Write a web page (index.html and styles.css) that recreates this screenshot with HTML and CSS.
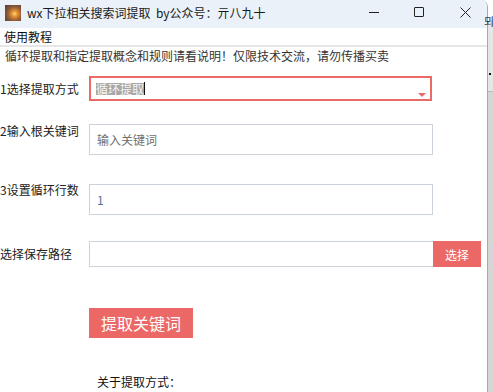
FILE: index.html
```html
<!DOCTYPE html>
<html lang="zh-CN">
<head>
    <meta charset="UTF-8">
    <title>wx下拉相关搜索词提取</title>
    <link rel="stylesheet" href="styles.css">
</head>
<body>
    <div class="screen">
        <div class="window">
            <div class="titlebar">
                <div class="app-icon"></div>
                <div class="title">wx下拉相关搜索词提取&nbsp;&nbsp;by公众号：亓八九十</div>
                <div class="controls">
                    <span class="ctl ctl-min"></span>
                    <span class="ctl ctl-max"></span>
                    <span class="ctl ctl-close">
                        <svg width="11" height="11" viewBox="0 0 11 11"><path d="M0.5 0.5L10.5 10.5M10.5 0.5L0.5 10.5" stroke="#222" stroke-width="1" fill="none"/></svg>
                    </span>
                </div>
            </div>
            <div class="menubar">使用教程</div>
            <div class="notice">循环提取和指定提取概念和规则请看说明！仅限技术交流，请勿传播买卖</div>

            <div class="form">
                <div class="row row-1">
                    <label class="label">1选择提取方式</label>
                    <div class="select">
                        <span class="sel-text">循环提取</span><span class="caret"></span>
                        <span class="arrow"></span>
                    </div>
                </div>
                <div class="row row-2">
                    <label class="label label-top">2输入根关键词</label>
                    <input class="field field-tall" type="text" placeholder="输入关键词">
                </div>
                <div class="row row-3">
                    <label class="label label-top">3设置循环行数</label>
                    <input class="field field-tall field-value" type="text" value="1">
                </div>
                <div class="row row-4">
                    <label class="label">选择保存路径</label>
                    <input class="field field-path" type="text">
                    <button class="pick-btn">选择</button>
                </div>
                <button class="run-btn">提取关键词</button>
                <div class="about">关于提取方式：</div>
            </div>
        </div>
        <div class="edge">
            <span class="edge-glyph">뫼</span>
            <span class="edge-dot"></span>
            <span class="edge-line"></span>
        </div>
    </div>
</body>
</html>
```
FILE: styles.css
```css
html, body {
    margin: 0;
    padding: 0;
    overflow: hidden;
}
body {
    font-family: "Noto Sans CJK SC", "Noto Sans", sans-serif;
    font-size: 12px;
    color: #222;
    background: #fff;
}
.screen {
    display: flex;
    width: 493px;
    height: 392px;
}
.window {
    width: 487px;
    height: 392px;
    background: #fff;
    border-right: 1px solid #a9a9a9;
    border-top-right-radius: 7px;
    overflow: hidden;
    flex-shrink: 0;
}
.titlebar {
    height: 28px;
    background: #eaf1f8;
    display: flex;
    align-items: center;
}
.app-icon {
    width: 16px;
    height: 16px;
    margin-left: 5px;
    margin-top: -3px;
    background: radial-gradient(circle at 60% 55%, #ffd27a 0, #e08a2c 25%, #8a5a3a 55%, #4e3a30 100%);
}
.title {
    margin-left: 6px;
    margin-top: -2px;
    line-height: 14px;
    color: #1a1a1a;
}
.controls {
    margin-left: auto;
    display: flex;
    align-items: center;
    height: 28px;
}
.ctl {
    display: block;
}
.ctl-min {
    width: 10px;
    height: 1px;
    background: #222;
    margin-top: -3px;
}
.ctl-max {
    width: 8px;
    height: 8px;
    border: 1px solid #222;
    border-radius: 1px;
    margin-left: 35px;
    margin-top: -4px;
}
.ctl-close {
    width: 11px;
    height: 11px;
    margin-left: 36px;
    margin-right: 16px;
    margin-top: -4px;
}
.ctl-close svg {
    display: block;
}
.menubar {
    height: 17px;
    line-height: 17px;
    padding-left: 4px;
    border-bottom: 2px solid #e6e6e6;
    color: #111;
}
.notice {
    height: 18px;
    line-height: 18px;
    padding-left: 5px;
    color: #333;
}
.form {
    padding-top: 11px;
}
.row {
    display: flex;
    align-items: center;
}
.label {
    width: 89px;
    flex-shrink: 0;
    line-height: 14px;
    color: #222;
}
.label-top {
    align-self: flex-start;
}
.row-2 {
    margin-top: 23px;
}
.row-3 {
    margin-top: 29px;
}
.row-3 .label-top {
    margin-top: -1px;
}
.row-4 {
    margin-top: 26px;
}
.select {
    position: relative;
    width: 334px;
    height: 21px;
    border: 2px solid #ea6a68;
    display: flex;
    align-items: center;
    padding-left: 5px;
}
.sel-text {
    background: #a7a7a7;
    color: #f4f4f4;
    line-height: 12px;
    height: 12px;
}
.caret {
    width: 1px;
    height: 13px;
    background: #111;
}
.arrow {
    position: absolute;
    right: 4px;
    top: 15px;
    width: 0;
    height: 0;
    border-left: 4px solid transparent;
    border-right: 4px solid transparent;
    border-top: 4px solid #ea6a68;
}
.field {
    box-sizing: border-box;
    width: 344px;
    margin: 0;
    border: 1px solid #cbd2da;
    outline: none;
    padding: 0 0 0 7px;
    font-family: inherit;
    font-size: 12px;
    color: #333;
    background: #fff;
}
.field-tall {
    height: 31px;
}
.field::placeholder {
    color: #6f6f6f;
}
.field-value {
    color: #4f7296;
}
.field-path {
    height: 26px;
    border-right: none;
}
.pick-btn {
    width: 48px;
    height: 26px;
    margin: 0;
    border: none;
    background: #ec6866;
    color: #fff;
    font-family: inherit;
    font-size: 12px;
    padding: 0;
}
.run-btn {
    display: block;
    margin: 41px 0 0 89px;
    width: 104px;
    height: 30px;
    border: none;
    background: #ec6866;
    color: #fff;
    font-family: inherit;
    font-size: 16px;
    padding: 0;
}
.about {
    margin: 37px 0 0 97px;
    line-height: 14px;
    color: #111;
}
.edge {
    position: relative;
    flex: 1;
    background: linear-gradient(to bottom, #fff 0, #fff 20px, #e6e6e6 21px, #e6e6e6 91px, #d6d6d6 92px);
}
.edge-glyph {
    position: absolute;
    left: -4px;
    top: 15px;
    font-size: 11px;
    color: #333;
    line-height: 12px;
}
.edge-dot {
    position: absolute;
    left: 1px;
    top: 73px;
    width: 2px;
    height: 2px;
    background: #111;
}
.edge-line {
    position: absolute;
    left: 0;
    right: 0;
    top: 91px;
    height: 1px;
    background: #b9b9b9;
}
```
